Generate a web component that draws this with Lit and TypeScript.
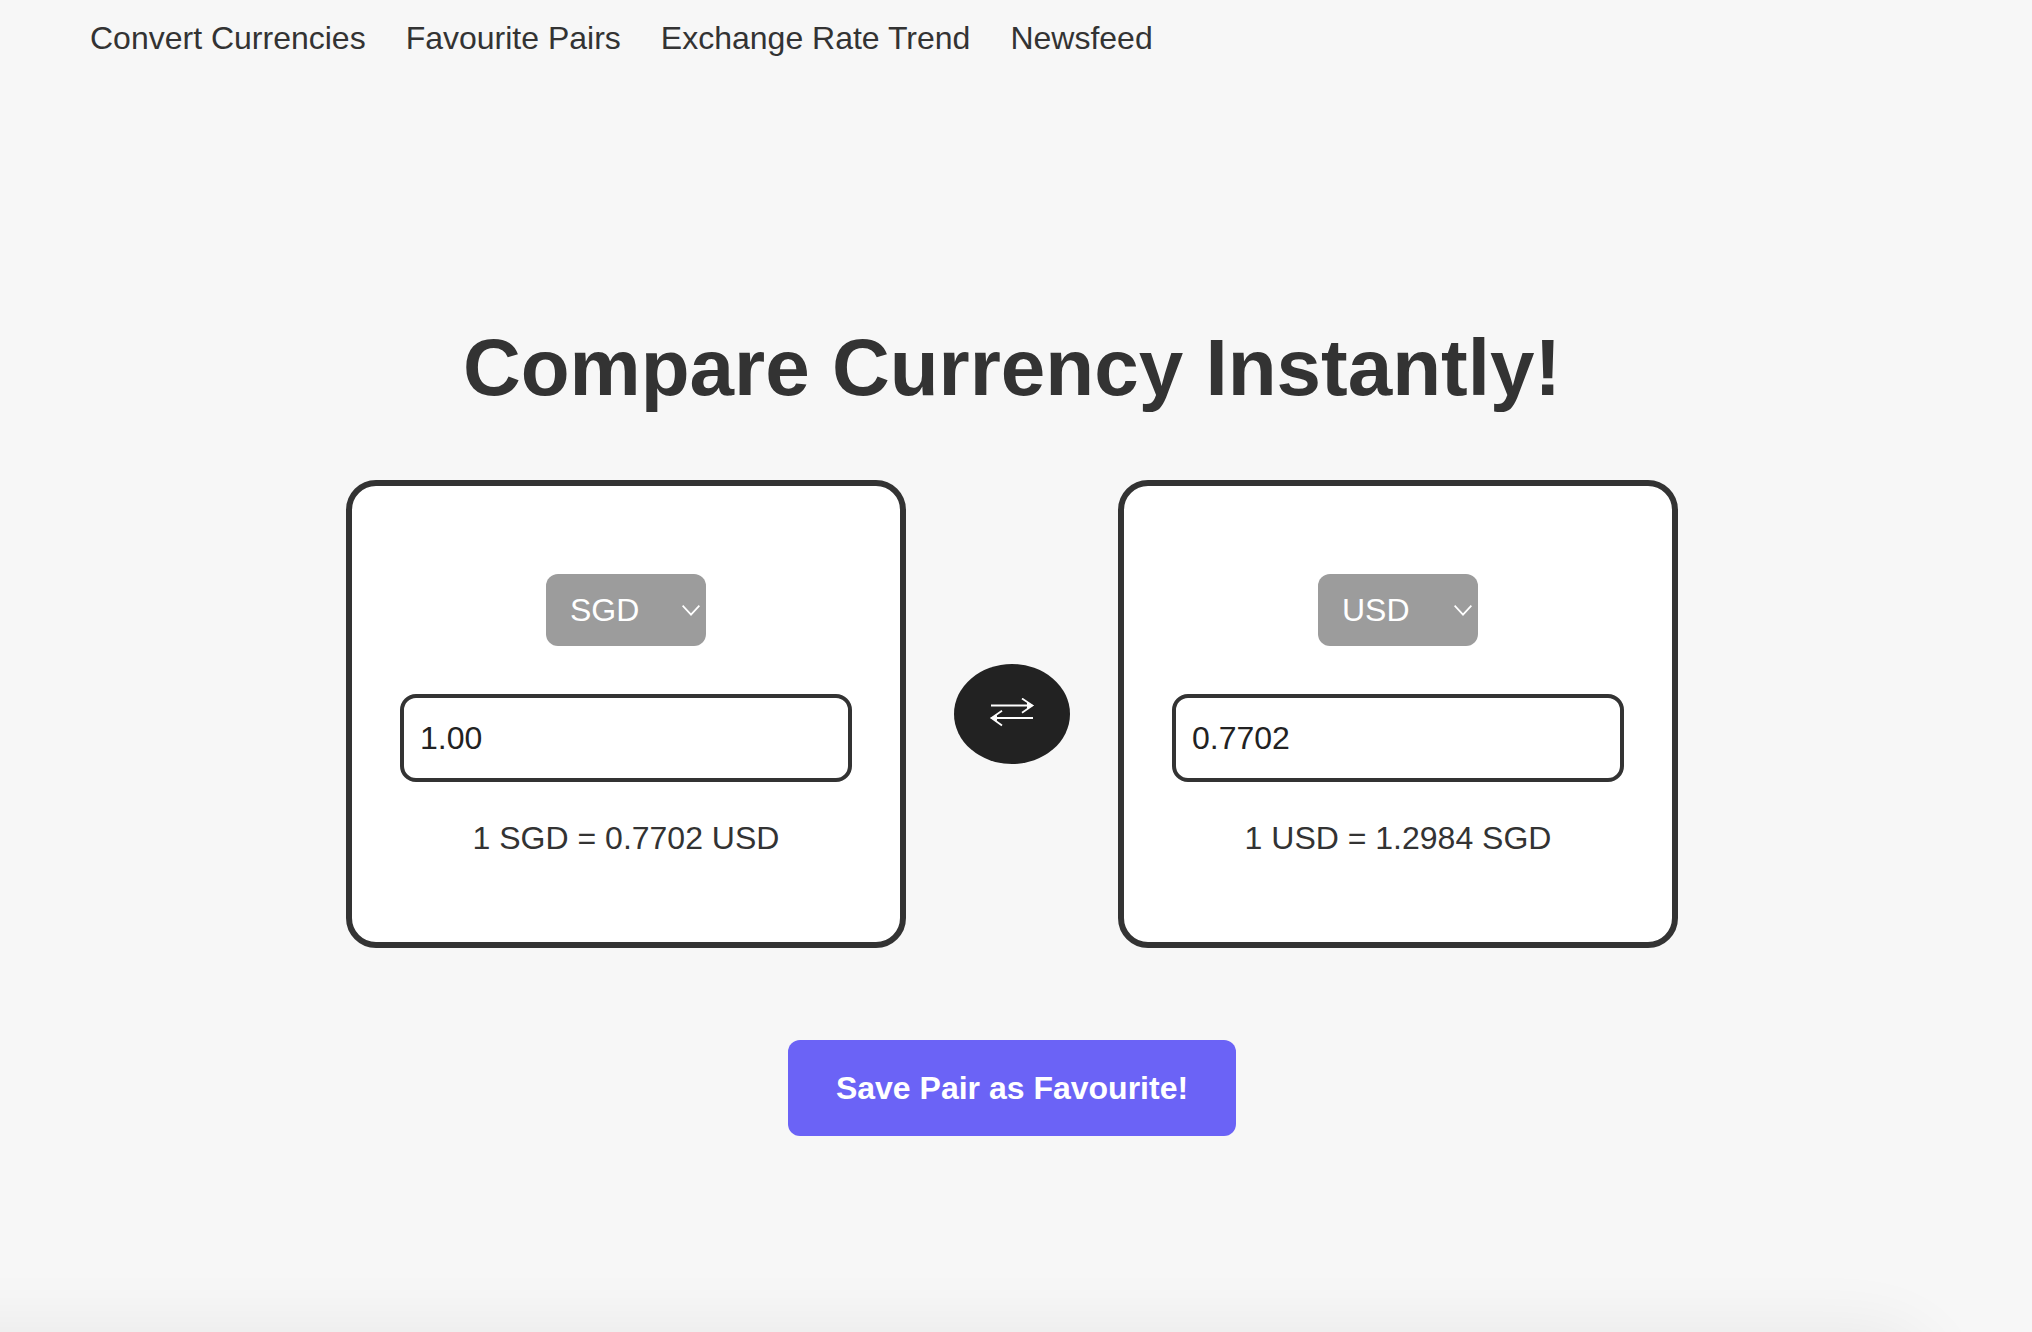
import { LitElement, html, css } from "lit";
import { customElement, property, state } from "lit/decorators.js";

const CURRENCIES = ["SGD", "USD"];
const RATES: Record<string, number> = { "SGD/USD": 0.7702, "USD/SGD": 1.2984 };

const rateOf = (from: string, to: string) => RATES[`${from}/${to}`] ?? 1;

@customElement("currency-card")
class CurrencyCard extends LitElement {
  @property() currency = "";
  @property() other = "";
  @property() amount = "";

  static styles = css`
    :host {
      display: block;
      flex: 1 1 0;
      min-width: 0;
    }
    .card {
      box-sizing: border-box;
      display: flex;
      flex-direction: column;
      align-items: center;
      padding: 88px 48px;
      border: 6px solid #333;
      border-radius: 30px;
      background: #fff;
    }
    .picker {
      display: grid;
      align-items: center;
      width: 160px;
      margin-bottom: 48px;
    }
    .select,
    .chevron {
      grid-area: 1 / 1;
    }
    .select {
      appearance: none;
      width: 100%;
      height: 72px;
      margin: 0;
      padding: 0 24px;
      border: 0;
      border-radius: 12px;
      background: #9c9c9c;
      color: #fff;
      font: 32px "Liberation Sans", Arial, sans-serif;
    }
    .chevron {
      justify-self: end;
      width: 18px;
      height: 12px;
      margin-right: 6px;
      pointer-events: none;
    }
    .amount {
      box-sizing: border-box;
      width: 100%;
      height: 88px;
      margin: 0 0 40px;
      padding: 0 16px;
      border: 4px solid #333;
      border-radius: 16px;
      background: #fff;
      color: #222;
      font: 32px "Liberation Sans", Arial, sans-serif;
    }
    .rate {
      margin: 0;
      line-height: 32px;
    }
  `;

  private pick(e: Event) {
    this.dispatchEvent(new CustomEvent("pick", { detail: (e.target as HTMLSelectElement).value }));
  }

  private edit(e: Event) {
    this.dispatchEvent(new CustomEvent("edit", { detail: (e.target as HTMLInputElement).value }));
  }

  render() {
    return html`
      <section class="card">
        <div class="picker">
          <select class="select" aria-label="Currency" @change=${this.pick}>
            ${CURRENCIES.map((c) => html`<option value=${c} .selected=${c === this.currency}>${c}</option>`)}
          </select>
          <svg class="chevron" viewBox="0 0 18 12" aria-hidden="true">
            <path d="M0.6 1.6 L9 10.6 L17.400 1.600" fill="none" stroke="#fff" stroke-width="1.8" />
          </svg>
        </div>
        <input class="amount" type="text" inputmode="decimal" aria-label="Amount" .value=${this.amount} @input=${this.edit} />
        <p class="rate">1 ${this.currency} = ${rateOf(this.currency, this.other).toFixed(4)} ${this.other}</p>
      </section>
    `;
  }
}

@customElement("app-root")
class AppRoot extends LitElement {
  @state() private from = "SGD";
  @state() private to = "USD";
  @state() private fromAmount = "1.00";
  @state() private toAmount = "0.7702";

  static styles = css`
    :host {
      display: block;
      font: 32px "Liberation Sans", Arial, sans-serif;
      color: #333;
    }
    .page {
      box-sizing: border-box;
      display: flex;
      flex-direction: column;
      min-height: 100vh;
      overflow: hidden;
      background: #f7f7f7;
    }
    .nav {
      display: flex;
      flex-wrap: wrap;
      gap: 40px;
      padding: 20px 90px;
      line-height: 36px;
    }
    .link {
      color: inherit;
      text-decoration: none;
    }
    .main {
      display: flex;
      flex: 1;
      flex-direction: column;
      align-items: center;
      padding: 244px 8px 48px 0;
    }
    .title {
      margin: 0 0 64px;
      font-size: 80px;
      line-height: 96px;
      text-align: center;
    }
    .converter {
      display: flex;
      align-items: center;
      gap: 48px;
      width: 100%;
      max-width: 1332px;
    }
    .swap {
      display: flex;
      flex: none;
      align-items: center;
      justify-content: center;
      width: 116px;
      height: 100px;
      margin: 0;
      padding: 0;
      border: 0;
      border-radius: 50%;
      background: #222;
    }
    .arrows {
      width: 44px;
      height: 32px;
    }
    .save {
      height: 96px;
      margin: 92px 0 0;
      padding: 0 48px;
      border: 0;
      border-radius: 12px;
      background: #6b63f6;
      color: #fff;
      font: bold 32px "Liberation Sans", Arial, sans-serif;
    }
    /* Soft shadow rising from below the bottom edge of the page. */
    .shade {
      height: 200px;
      margin: 0 100px -200px -200px;
      border-radius: 60px;
      box-shadow: 0 0 70px rgba(0, 0, 0, 0.07);
    }
  `;

  private convert(value: string, from: string, to: string) {
    return String(Number(((parseFloat(value) || 0) * rateOf(from, to)).toFixed(4)));
  }

  private editFrom(value: string) {
    this.fromAmount = value;
    this.toAmount = this.convert(value, this.from, this.to);
  }

  private editTo(value: string) {
    this.toAmount = value;
    this.fromAmount = this.convert(value, this.to, this.from);
  }

  private setPair(from: string, to: string) {
    this.from = from;
    this.to = to;
    this.editFrom(this.fromAmount);
  }

  render() {
    return html`
      <div class="page">
        <nav class="nav">
          <a class="link" href="#convert">Convert Currencies</a>
          <a class="link" href="#favourites">Favourite Pairs</a>
          <a class="link" href="#trend">Exchange Rate Trend</a>
          <a class="link" href="#news">Newsfeed</a>
        </nav>
        <main class="main">
          <h1 class="title">Compare Currency Instantly!</h1>
          <div class="converter">
            <currency-card
              .currency=${this.from}
              .other=${this.to}
              .amount=${this.fromAmount}
              @pick=${(e: CustomEvent) => this.setPair(e.detail, this.to)}
              @edit=${(e: CustomEvent) => this.editFrom(e.detail)}
            ></currency-card>
            <button class="swap" type="button" aria-label="Swap currencies" @click=${() => this.setPair(this.to, this.from)}>
              <svg class="arrows" viewBox="0 0 44 32" aria-hidden="true">
                <path d="M1 7.5 H40 M4 20 H43" fill="none" stroke="#fff" stroke-width="2" />
                <path d="M32 0.5 L42.500 7.500 L32 14.800 M12 12.800 L1.500 20 L12 27.500" fill="none" stroke="#fff" stroke-width="1.800" />
                <path d="M37 4.500 L44 7.500 L37 10.500 Z M7 17 L0 20 L7 23 Z" fill="#fff" />
              </svg>
            </button>
            <currency-card
              .currency=${this.to}
              .other=${this.from}
              .amount=${this.toAmount}
              @pick=${(e: CustomEvent) => this.setPair(this.from, e.detail)}
              @edit=${(e: CustomEvent) => this.editTo(e.detail)}
            ></currency-card>
          </div>
          <button class="save" type="button">Save Pair as Favourite!</button>
        </main>
        <div class="shade"></div>
      </div>
    `;
  }
}
